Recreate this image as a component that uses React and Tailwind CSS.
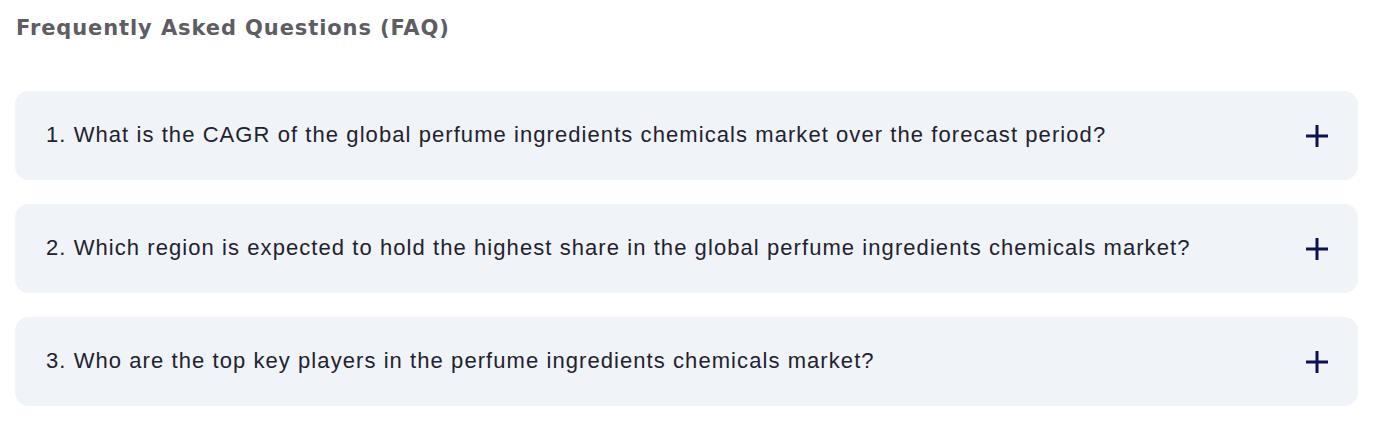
export default function App() {
  const faqs = [
    '1. What is the CAGR of the global perfume ingredients chemicals market over the forecast period?',
    '2. Which region is expected to hold the highest share in the global perfume ingredients chemicals market?',
    '3. Who are the top key players in the perfume ingredients chemicals market?',
  ]

  return (
    <div className="bg-white px-[15px] pt-[12px] w-[1378px] h-[426px]">
      <h2 className="text-[21px] font-bold tracking-[0.9px] text-[#5e5d63] leading-[32px] pl-[1px]" style={{ fontFamily: '"DejaVu Sans", sans-serif' }}>
        Frequently Asked Questions (FAQ)
      </h2>
      <div className="mt-[47px] flex flex-col gap-[24px] w-[1343px]">
        {faqs.map((q) => (
          <div key={q} className="flex h-[89px] items-center justify-between rounded-[14px] bg-[#f0f3f8] pl-[31px] pr-[30px]">
            <p className="text-[22px] leading-[28px] tracking-[1.07px] text-[#222230] -mt-[2px]" style={{ fontFamily: '"Liberation Sans", Arial, sans-serif' }}>{q}</p>
            <svg width="22" height="22" viewBox="0 0 22 22" className="shrink-0">
              <path d="M11 0V22M0 11H22" stroke="#0c1150" strokeWidth="3" />
            </svg>
          </div>
        ))}
      </div>
    </div>
  )
}
